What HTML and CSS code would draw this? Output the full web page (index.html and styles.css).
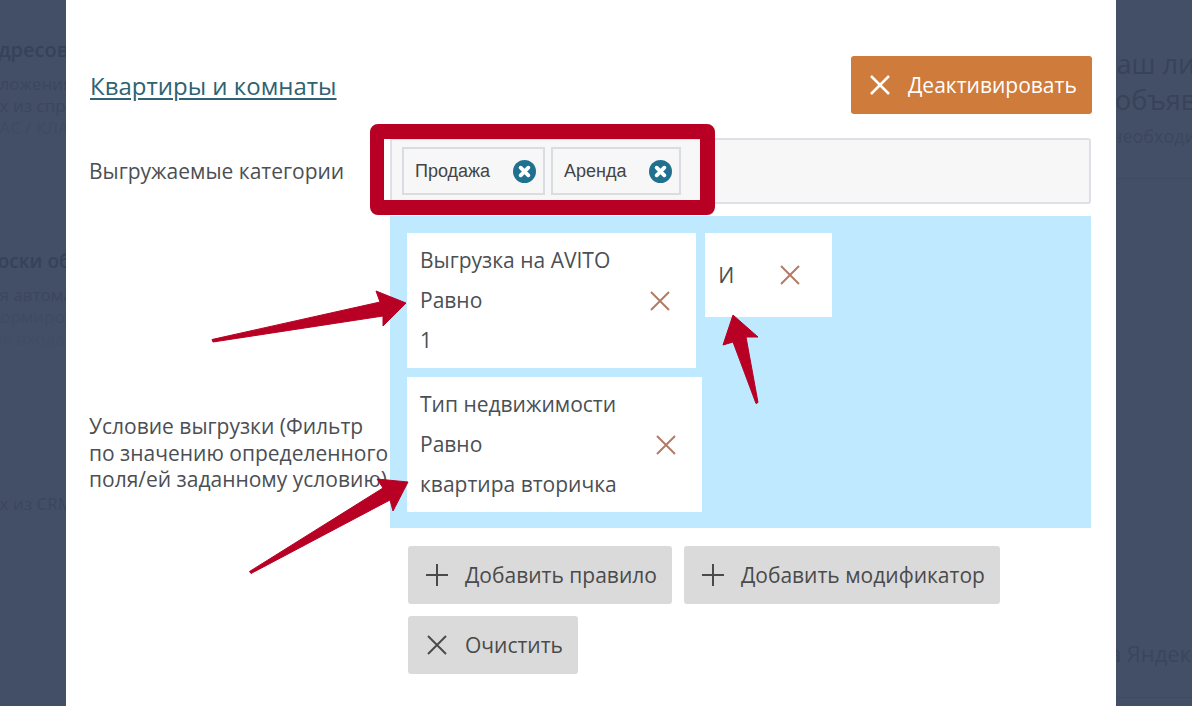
FILE: index.html
```html
<!DOCTYPE html>
<html lang="ru">
<head>
<meta charset="utf-8">
<title>Квартиры и комнаты</title>
<link rel="stylesheet" href="styles.css">
</head>
<body>
<div class="page">
  <aside class="side side-left">
    <div class="bg-block block-a">
      <div class="bg-head shift-0">Адресов базы</div>
      <div class="bg-line shift-1">Расположения</div>
      <div class="bg-line shift-2">данных из спр</div>
      <div class="bg-line faint shift-3">ФИАС / КЛАДР</div>
    </div>
    <div class="bg-block block-b">
      <div class="bg-head shift-4">Доски объявлений</div>
      <div class="bg-line shift-5">для автоматической</div>
      <div class="bg-line faint shift-6">формирования</div>
      <div class="bg-line fainter shift-7">ние входа</div>
    </div>
    <div class="bg-block block-c">
      <div class="bg-line shift-8">данных из CRM</div>
    </div>
  </aside>

  <main class="modal">
    <header class="modal-head">
      <a class="modal-title" href="#">Квартиры и комнаты</a>
      <button class="btn btn-orange" type="button">
        <svg class="ico" viewBox="0 0 22 22"><path d="M2 2 20 20M20 2 2 20"/></svg>
        <span>Деактивировать</span>
      </button>
    </header>

    <section class="row row-cats">
      <label class="row-label">Выгружаемые категории</label>
      <div class="tags-input">
        <span class="tag tag-sale">Продажа
          <svg class="tag-x" viewBox="0 0 24 24"><circle cx="12" cy="12" r="12"/><path d="M8 8 16 16M16 8 8 16"/></svg>
        </span>
        <span class="tag tag-rent">Аренда
          <svg class="tag-x" viewBox="0 0 24 24"><circle cx="12" cy="12" r="12"/><path d="M8 8 16 16M16 8 8 16"/></svg>
        </span>
      </div>
    </section>

    <section class="row row-filter">
      <label class="row-label">Условие выгрузки (Фильтр по значению определенного поля/ей заданному условию)</label>
      <div class="filter">
        <div class="rules">
          <div class="rule">
            <div class="rule-text">
              <div>Выгрузка на AVITO</div>
              <div>Равно</div>
              <div>1</div>
            </div>
            <svg class="rule-x" viewBox="0 0 20 20"><path d="M1 1 19 19M19 1 1 19"/></svg>
          </div>
          <div class="rule rule-op">
            <div class="rule-text"><div>И</div></div>
            <svg class="rule-x" viewBox="0 0 20 20"><path d="M1 1 19 19M19 1 1 19"/></svg>
          </div>
          <div class="rule rule-type">
            <div class="rule-text">
              <div>Тип недвижимости</div>
              <div>Равно</div>
              <div>квартира вторичка</div>
            </div>
            <svg class="rule-x" viewBox="0 0 20 20"><path d="M1 1 19 19M19 1 1 19"/></svg>
          </div>
        </div>
        <div class="actions">
          <button class="btn btn-grey" type="button">
            <svg class="ico" viewBox="0 0 22 22"><path d="M11 0V22M0 11H22"/></svg>
            <span>Добавить правило</span>
          </button>
          <button class="btn btn-grey" type="button">
            <svg class="ico" viewBox="0 0 22 22"><path d="M11 0V22M0 11H22"/></svg>
            <span>Добавить модификатор</span>
          </button>
          <button class="btn btn-grey" type="button">
            <svg class="ico" viewBox="0 0 22 22"><path d="M2 2 20 20M20 2 2 20"/></svg>
            <span>Очистить</span>
          </button>
        </div>
      </div>
    </section>
  </main>

  <aside class="side side-right">
    <div class="bg-big big-one">Ваш личный</div>
    <div class="bg-big big-two">объявления</div>
    <div class="bg-line need">необходимо</div>
    <div class="bg-rule rule-one"></div>
    <div class="bg-yandex">на Яндекс</div>
    <div class="bg-rule rule-two"></div>
  </aside>

  <div class="mark-frame"></div>
  <svg class="marks" viewBox="0 0 1192 706">
    <path d="M212 339.500 380 302 376 291 406 303 383 326 383 316 213 342Z"/>
    <path d="M249.500 571.500 383 488 377 479 408 482 393 511 390 500 251 573.500Z"/>
    <path d="M756 403.500 733 342 723 345 733 315 758 337 746 337 758 402.500Z"/>
  </svg>
</div>
</body>
</html>
```

FILE: styles.css
```css
* { box-sizing: border-box; }
html, body { margin: 0; height: 100%; }
body {
  font-family: "Open Sans", "Noto Sans", sans-serif;
  font-size: 21px;
  color: #4b4f54;
  background: #434f66;
  overflow: hidden;
}
.page {
  position: relative;
  display: grid;
  grid-template-columns: 66px 1050px 76px;
  width: 1192px;
  height: 706px;
}

/* dimmed page behind the dialog */
.side {
  height: 706px;
  overflow: hidden;
  white-space: nowrap;
  color: #3a465c;
}
.bg-head { font-size: 20px; line-height: 26px; font-weight: 600; color: #364258; margin-bottom: 10px; }
.bg-line { font-size: 17px; line-height: 22px; color: #3b475d; }
.faint { color: #3f4b62; }
.fainter { color: #414d64; }
.block-a { padding-top: 37px; }
.block-b { padding-top: 109px; }
.block-c { padding-top: 143px; }
.shift-0 { margin-left: -15px; }
.shift-1 { margin-left: -49px; }
.shift-2 { margin-left: -54px; }
.shift-3 { margin-left: -27px; }
.bg-head.shift-4 { margin-left: -16px; font-size: 19px; }
.shift-5 { margin-left: -20px; }
.shift-6 { margin-left: -12px; }
.shift-7 { margin-left: -19px; }
.shift-8 { margin-left: -54px; }
.bg-big { font-size: 27px; line-height: 36px; color: #384359; }
.big-one { margin-top: 46px; margin-left: -17px; }
.big-two { margin-left: -1px; }
.need { margin-top: 7px; margin-left: -5px; font-size: 18px; }
.bg-rule { height: 1px; background: #3f4b61; }
.rule-one { margin-top: 31px; }
.rule-two { margin-top: 29px; }
.bg-yandex { margin-top: 459px; margin-left: -21px; font-size: 22px; line-height: 30px; color: #3a465c; }

/* dialog */
.modal {
  height: 706px;
  padding: 56px 24px 0;
  background: #fff;
  overflow: hidden;
}
.modal-head {
  display: flex;
  justify-content: space-between;
  align-items: center;
  height: 58px;
  margin-bottom: 24px;
}
.modal-title {
  font-size: 24px;
  line-height: 32px;
  margin-top: 2px;
  color: #2f6272;
  text-decoration: underline;
  text-underline-offset: 3px;
}
.row {
  display: grid;
  grid-template-columns: 300px 701px;
  align-items: center;
}
.row-cats { margin-bottom: 12px; }
.row-label { line-height: 26.600px; margin-left: -1px; }

.btn {
  display: inline-flex;
  align-items: center;
  height: 58px;
  border: 0;
  border-radius: 3px;
  padding: 0 15px 0 18px;
  font: inherit;
  color: #4a4a4a;
  white-space: nowrap;
}
.ico {
  flex: none;
  width: 22px;
  height: 22px;
  margin-right: 17px;
  fill: none;
  stroke: currentColor;
  stroke-width: 2;
}
.btn-orange {
  background: #cf7b3c;
  color: #fff;
  width: 241px;
}
.btn-orange .ico { stroke-width: 2.500; }
.btn-grey { background: #dadada; }

.tags-input {
  display: flex;
  align-items: center;
  gap: 6px;
  height: 66px;
  padding-left: 10px;
  background: #f7f7f7;
  border: 2px solid #dde1e6;
  border-radius: 3px;
}
.tag {
  display: flex;
  align-items: center;
  justify-content: space-between;
  height: 48px;
  padding: 0 7px 0 11px;
  background: #f7f7f7;
  border: 2px solid #d9dde2;
  font-family: "Liberation Sans", Arial, sans-serif;
  font-size: 18px;
  color: #444;
}
.tag-sale { width: 143px; }
.tag-rent { width: 130px; }
.tag-x { width: 23px; height: 23px; flex: none; }
.tag-x circle { fill: #22708f; }
.tag-x path { fill: none; stroke: #fff; stroke-width: 4; stroke-linecap: round; }

.filter { display: flex; flex-direction: column; }
.rules {
  display: flex;
  flex-wrap: wrap;
  align-items: flex-start;
  align-content: flex-start;
  height: 312px;
  padding: 17px 0 0 17px;
  gap: 9px;
  background: #bee9ff;
}
.rule {
  display: flex;
  align-items: center;
  padding: 7px 26px 8px 13px;
  background: #fff;
  white-space: nowrap;
}
.rule-text { line-height: 40px; }
.rule-x {
  flex: none;
  width: 20px;
  height: 20px;
  margin-left: 40px;
  margin-top: 2px;
  fill: none;
  stroke: #b07c66;
  stroke-width: 2;
}
.rule-type .rule-x { margin-left: 39px; }
.rule-op { height: 84px; width: 127px; padding-left: 13px; padding-right: 32px; }
.rule-op .rule-x { margin-left: 46px; margin-top: 0; }
.actions {
  display: flex;
  flex-wrap: wrap;
  gap: 12px;
  padding: 18px 0 16px 18px;
  width: 640px;
}

/* annotations drawn on top of the screenshot */
.mark-frame {
  position: absolute;
  left: 370px;
  top: 124px;
  width: 345px;
  height: 91px;
  border: solid #b80024;
  border-width: 15px 15px 15px 14px;
  border-radius: 8px;
}
.marks {
  position: absolute;
  left: 0;
  top: 0;
  width: 1192px;
  height: 706px;
  pointer-events: none;
}
.marks path { fill: #b80024; stroke: #b80024; stroke-width: 1; stroke-linejoin: round; }
```
